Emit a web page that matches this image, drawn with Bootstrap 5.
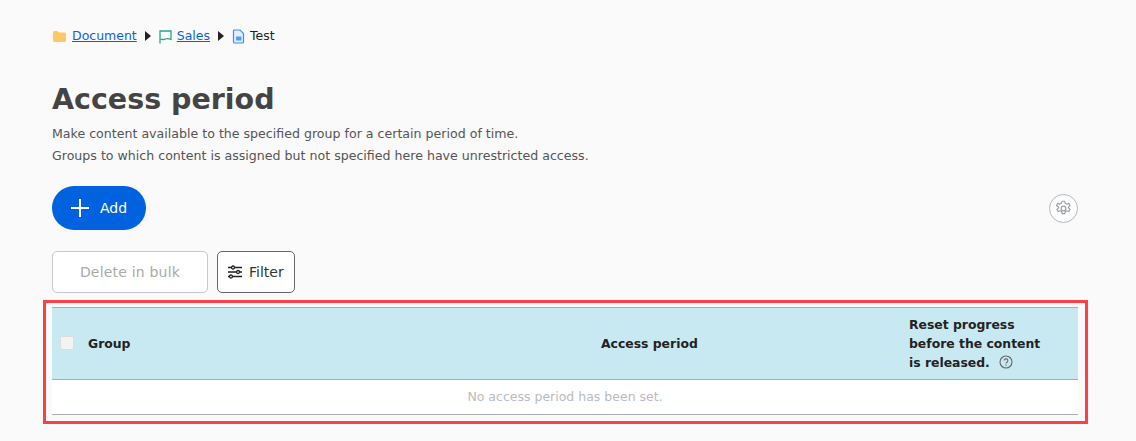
<!DOCTYPE html>
<html lang="en">
<head>
    <meta charset="UTF-8">
    <meta name="viewport" content="width=device-width, initial-scale=1.0">
    <title>Access period</title>
    <link href="https://cdn.jsdelivr.net/npm/bootstrap@5.3.0/dist/css/bootstrap.min.css" rel="stylesheet">
    <style>
        body { background: #fafafa; font-family: "DejaVu Sans", "Noto Sans", sans-serif; color: #444; overflow: hidden; }
        .page-wrap { padding: 27px 58px 0 52px; }
        .crumbs { height: 18px; font-size: 12.5px; color: #222; gap: 5px; }
        .crumbs a { color: #0d5fe0; }
        .crumb-sep { width: 0; height: 0; border-left: 6px solid #222; border-top: 5px solid transparent; border-bottom: 5px solid transparent; margin: 0 3px; }
        .page-title { font-size: 28.5px; font-weight: 700; line-height: 40px; margin: 35px 0 3px; color: #444; }
        .page-desc { font-size: 12.6px; line-height: 22px; color: #555; margin: 0; }
        .add-row { margin-top: 19px; }
        .add-btn { background: #0062de; color: #fff; border: 0; border-radius: 22px; height: 44px; width: 94px; font-size: 14px; gap: 10px; padding: 0 0 0 18px; }
        .add-btn:hover { background: #0062de; color: #fff; }
        .gear-btn { width: 29px; height: 29px; border: 1px solid #b4b7bc; border-radius: 50%; background: #fff; }
        .bulk-btn, .bulk-btn:disabled { width: 156px; height: 42px; font-size: 14px; letter-spacing: .2px; color: #aaa; border: 1px solid #c8c8c8; border-radius: 5px; background: #fff; opacity: 1; }
        .filter-btn { width: 78px; height: 42px; font-size: 14px; color: #333; border: 1px solid #666; border-radius: 5px; background: #fff; gap: 6px; padding: 0 0 0 9px; }
        .filter-gap { gap: 9px; margin-top: 21px; }
        .red-box { border: 3px solid #fb4047; margin: 7px -10px 0 -9px; padding: 4px 7px 6px 6px; }
        .period-table { width: 100%; margin: 0; font-size: 12.4px; border-collapse: collapse; }
        .period-table th { background: #c9e9f2; border-top: 1px solid #a9adb5; border-bottom: 1px solid #a9adb5; color: #222; font-weight: 700; line-height: 19px; height: 72px; vertical-align: middle; padding: 0; }
        .period-table td { background: #fff; border-bottom: 1px solid #a9adb5; height: 35px; text-align: center; color: #bbb; font-size: 12.5px; padding: 0; }
        .fake-check { display: block; width: 14px; height: 14px; margin: 0 0 2px 8px; background: #f3f3f3; border: 1px solid #ddd; border-radius: 2px; }
        .col-check { width: 36px; }
        .col-group { width: 513px; }
        .col-period { width: 308px; }
        .help-icon { vertical-align: -2px; margin-left: 5px; }
    </style>
</head>
<body>

    <div class="page-wrap">
        <nav class="crumbs d-flex align-items-center">
            <svg width="15" height="13" viewBox="0 0 15 13"><path d="M1 2.500A1.500 1.500 0 0 1 2.500 1h3l1.500 1.500h5.500A1.500 1.500 0 0 1 14 4v6.500a1.500 1.500 0 0 1-1.500 1.500h-10A1.500 1.500 0 0 1 1 10.500z" fill="#fdc966"/></svg>
            <a href="#">Document</a>
            <span class="crumb-sep"></span>
            <svg width="13" height="15" viewBox="0 0 13 15" fill="none" stroke="#2aa58c" stroke-width="1.300"><path d="M1 14.500V2h11v8.500Q8.500 9 6.500 10T1 10"/></svg>
            <a href="#">Sales</a>
            <span class="crumb-sep"></span>
            <svg width="13" height="15" viewBox="0 0 13 15"><path d="M2.500 1h5.500l3.500 3.500v8.500a1 1 0 0 1-1 1h-8a1 1 0 0 1-1-1v-11a1 1 0 0 1 1-1z" fill="#e3efff" stroke="#3f8ef5" stroke-width="1.200"/><path d="M4 7.500h5.500v4h-5.500z" fill="#5a9cf5"/></svg>
            <span>Test</span>
        </nav>

        <h1 class="page-title">Access period</h1>
        <p class="page-desc">Make content available to the specified group for a certain period of time.</p>
        <p class="page-desc">Groups to which content is assigned but not specified here have unrestricted access.</p>

        <div class="add-row d-flex justify-content-between align-items-center">
            <button class="btn add-btn d-flex align-items-center">
                <svg width="20" height="20" viewBox="0 0 20 20" stroke="#fff" stroke-width="2"><path d="M10 1v18M1 10h18"/></svg>
                Add
            </button>
            <button class="btn gear-btn d-flex align-items-center justify-content-center p-0" aria-label="Settings">
                <svg width="17" height="17" viewBox="0 0 16 16" fill="none" stroke="#9a9ea5" stroke-width="1.100"><circle cx="8" cy="8" r="2.200"/><path d="M6.800 1.200h2.400l.4 1.900 1.500.8 1.900-.7 1.200 2-1.500 1.300v1l1.500 1.300-1.200 2-1.900-.7-1.500.8-.4 1.900H6.800l-.4-1.900-1.500-.8-1.900.7-1.200-2 1.500-1.300v-1L1.300 5.200l1.200-2 1.900.7 1.500-.8z" stroke-linejoin="round"/></svg>
            </button>
        </div>

        <div class="d-flex filter-gap">
            <button class="btn bulk-btn p-0" disabled>Delete in bulk</button>
            <button class="btn filter-btn d-flex align-items-center">
                <svg width="16" height="14" viewBox="0 0 16 14" fill="none" stroke="#222" stroke-width="1.300"><path d="M1 2.500h3.500M7.500 2.500H15M1 7h8.500M12.500 7H15M1 11.500h1.500M5.500 11.500H15"/><circle cx="6" cy="2.500" r="1.500"/><circle cx="11" cy="7" r="1.500"/><circle cx="4" cy="11.500" r="1.500"/></svg>
                Filter
            </button>
        </div>

        <div class="red-box">
            <table class="period-table">
                <thead>
                    <tr>
                        <th class="col-check"><span class="fake-check"></span></th>
                        <th class="col-group">Group</th>
                        <th class="col-period">Access period</th>
                        <th>Reset progress<br>before the content<br>is released.
                            <svg class="help-icon" width="14" height="14" viewBox="0 0 14 14" fill="none" stroke="#666" stroke-width="1.100"><circle cx="7" cy="7" r="6"/><path d="M5.200 5.600a1.800 1.800 0 1 1 2.700 1.600c-.6.300-.9.600-.9 1.300M7 9.500v1.200"/></svg>
                        </th>
                    </tr>
                </thead>
                <tbody>
                    <tr><td colspan="4">No access period has been set.</td></tr>
                </tbody>
            </table>
        </div>
    </div>

    <script src="https://cdn.jsdelivr.net/npm/bootstrap@5.3.0/dist/js/bootstrap.bundle.min.js"></script>
</body>
</html>
